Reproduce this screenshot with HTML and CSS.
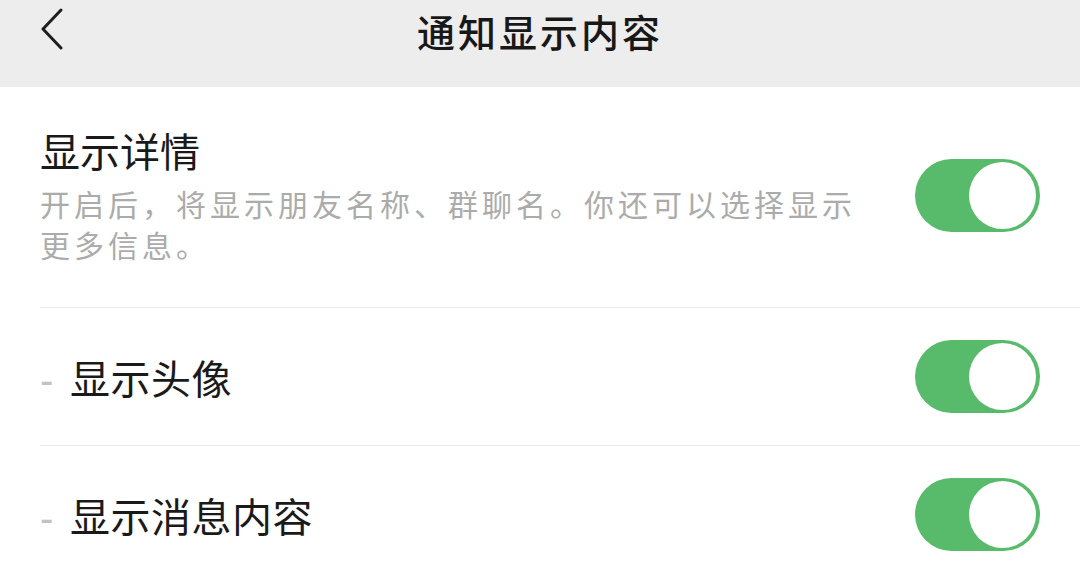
FILE: index.html
```html
<!DOCTYPE html>
<html lang="zh-CN">
<head>
    <meta charset="UTF-8">
    <meta name="viewport" content="width=device-width, initial-scale=1.0">
    <title>通知显示内容</title>
    <link rel="stylesheet" href="styles.css">
</head>
<body>
    <!-- Шапка -->
    <div class="topbar">
        <div class="back">
            <svg width="24" height="44" viewBox="0 0 24 44">
                <path d="M21 2 L3 21 L21 40" fill="none" stroke="#1f1f1f" stroke-width="3" stroke-linecap="round" stroke-linejoin="round"/>
            </svg>
        </div>
        <div class="topbar-title">通知显示内容</div>
        <div></div>
    </div>

    <div class="list">
        <div class="row row-main">
            <div class="row-text">
                <div class="row-title">显示详情</div>
                <div class="row-desc">开启后，将显示朋友名称、群聊名。你还可以选择显示更多信息。</div>
            </div>
            <div class="switch"><span class="knob"></span></div>
        </div>

        <div class="row">
            <div class="row-label"><span class="dash">-</span>显示头像</div>
            <div class="switch"><span class="knob"></span></div>
        </div>

        <div class="row">
            <div class="row-label"><span class="dash">-</span>显示消息内容</div>
            <div class="switch"><span class="knob"></span></div>
        </div>
    </div>
</body>
</html>
```

FILE: styles.css
```css
body {
    margin: 0;
    font-family: "Noto Sans CJK SC", "Noto Sans", sans-serif;
    background-color: #fff;
    color: #1a1a1a;
}

.topbar {
    display: grid;
    grid-template-columns: 1fr auto 1fr;
    align-items: start;
    height: 87px;
    background-color: #ededed;
}

.back {
    padding: 8px 0 0 40px;
}

.topbar-title {
    font-size: 38px;
    font-weight: 500;
    line-height: 40px;
    letter-spacing: 3px;
    padding-top: 11px;
    color: #181818;
}

.list {
    background-color: #fff;
}

.row {
    display: flex;
    align-items: center;
    justify-content: space-between;
    height: 137px;
    margin-left: 40px;
    padding-right: 40px;
    border-bottom: 1px solid #ececec;
}

.row-main {
    height: auto;
    padding-top: 38px;
    padding-bottom: 42px;
}

.row-title {
    font-size: 40px;
    line-height: 50px;
}

.row-desc {
    width: 840px;
    margin-top: 8px;
    font-size: 30px;
    line-height: 41px;
    letter-spacing: 4px;
    color: #ababab;
}

.row-label {
    font-size: 40px;
    line-height: 50px;
    letter-spacing: 0.5px;
    padding-top: 4px;
}

.dash {
    display: inline-block;
    width: 30px;
    color: #c2c2c2;
    font-family: "Liberation Sans", sans-serif;
    font-weight: 300;
}

.switch {
    display: flex;
    align-items: center;
    justify-content: flex-end;
    width: 125px;
    height: 73px;
    padding: 0 4px;
    box-sizing: border-box;
    border-radius: 37px;
    background-color: #58ba6b;
    flex-shrink: 0;
}

.knob {
    width: 67px;
    height: 67px;
    border-radius: 50%;
    background-color: #fff;
}
```
